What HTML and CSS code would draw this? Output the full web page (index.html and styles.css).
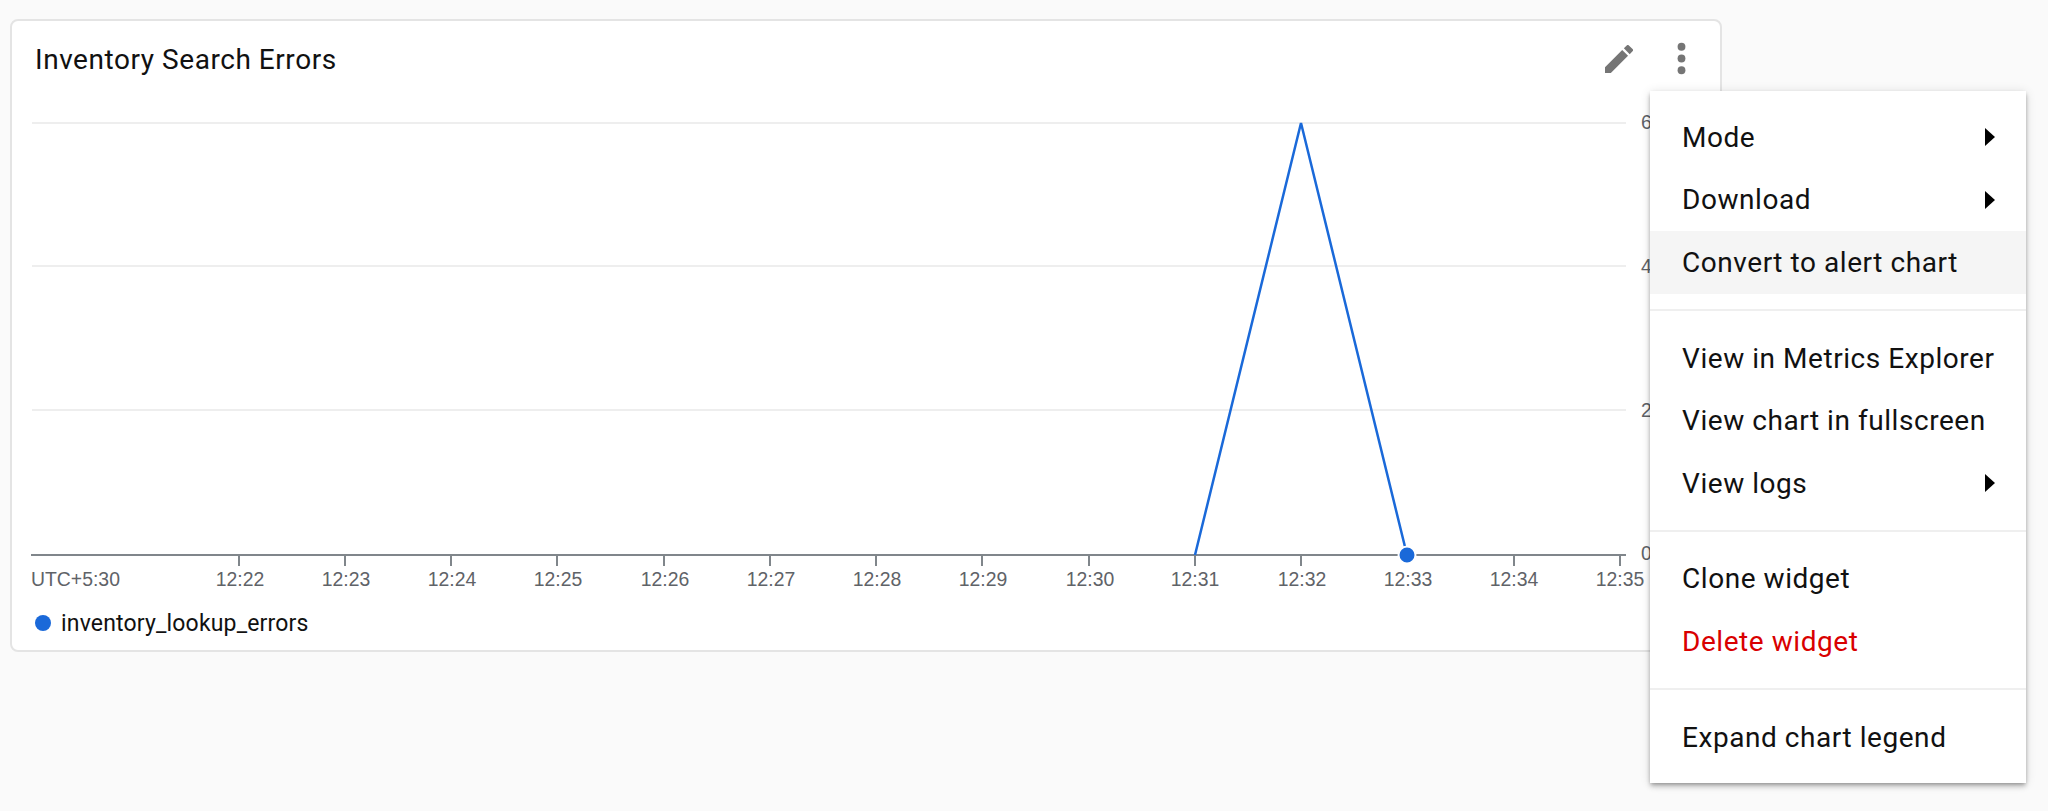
FILE: index.html
```html
<!DOCTYPE html>
<html lang="en">

<head>
    <meta charset="UTF-8">
    <title>Inventory Search Errors</title>
    <link rel="stylesheet" href="styles.css">
</head>

<body>
    <div class="card">
        <div class="card-header">
            <div class="card-title">Inventory Search Errors</div>
            <svg class="icon-edit" viewBox="3 3 18 18"><path d="M3 17.25V21h3.75L17.81 9.94l-3.75-3.75L3 17.25zM20.71 7.04a1 1 0 0 0 0-1.41l-2.34-2.34a1 1 0 0 0-1.41 0l-1.83 1.83 3.75 3.75 1.83-1.83z"/></svg>
            <svg class="icon-more" viewBox="0 0 24 24"><circle cx="12" cy="6" r="2"/><circle cx="12" cy="12" r="2"/><circle cx="12" cy="18" r="2"/></svg>
        </div>

        <!-- viewBox starts at the card's content corner so the numbers read as page pixels -->
        <svg class="chart" viewBox="12 93 1708 507">
            <g class="grid">
                <line x1="32" y1="123" x2="1626" y2="123"/>
                <line x1="32" y1="266" x2="1626" y2="266"/>
                <line x1="32" y1="410" x2="1626" y2="410"/>
            </g>
            <g class="axis">
                <line x1="31" y1="555" x2="1626" y2="555"/>
                <line x1="239" y1="555" x2="239" y2="566"/>
                <line x1="345" y1="555" x2="345" y2="566"/>
                <line x1="451" y1="555" x2="451" y2="566"/>
                <line x1="557" y1="555" x2="557" y2="566"/>
                <line x1="664" y1="555" x2="664" y2="566"/>
                <line x1="770" y1="555" x2="770" y2="566"/>
                <line x1="876" y1="555" x2="876" y2="566"/>
                <line x1="982" y1="555" x2="982" y2="566"/>
                <line x1="1089" y1="555" x2="1089" y2="566"/>
                <line x1="1195" y1="555" x2="1195" y2="566"/>
                <line x1="1301" y1="555" x2="1301" y2="566"/>
                <line x1="1514" y1="555" x2="1514" y2="566"/>
                <line x1="1620" y1="555" x2="1620" y2="566"/>
            </g>
            <g class="labels">
                <text x="31" y="586">UTC+5:30</text>
                <g class="tick-labels">
                    <text x="240" y="586">12:22</text>
                    <text x="346" y="586">12:23</text>
                    <text x="452" y="586">12:24</text>
                    <text x="558" y="586">12:25</text>
                    <text x="665" y="586">12:26</text>
                    <text x="771" y="586">12:27</text>
                    <text x="877" y="586">12:28</text>
                    <text x="983" y="586">12:29</text>
                    <text x="1090" y="586">12:30</text>
                    <text x="1195" y="586">12:31</text>
                    <text x="1302" y="586">12:32</text>
                    <text x="1408" y="586">12:33</text>
                    <text x="1514" y="586">12:34</text>
                    <text x="1620" y="586">12:35</text>
                </g>
                <text x="1641" y="129">6</text>
                <text x="1641" y="273">4</text>
                <text x="1641" y="417">2</text>
                <text x="1641" y="560">0</text>
            </g>
            <polyline class="series" points="1195,555 1301,123 1407,555"/>
            <circle class="series-dot" cx="1407" cy="555" r="8.5"/>
        </svg>

        <div class="legend">
            <span class="legend-dot"></span>
            <span>inventory_lookup_errors</span>
        </div>
    </div>

    <div class="menu">
        <div class="menu-group">
            <div class="menu-item">Mode<span class="arrow"></span></div>
            <div class="menu-item">Download<span class="arrow"></span></div>
            <div class="menu-item active">Convert to alert chart</div>
        </div>
        <div class="menu-group">
            <div class="menu-item">View in Metrics Explorer</div>
            <div class="menu-item">View chart in fullscreen</div>
            <div class="menu-item">View logs<span class="arrow"></span></div>
        </div>
        <div class="menu-group">
            <div class="menu-item">Clone widget</div>
            <div class="menu-item danger">Delete widget</div>
        </div>
        <div class="menu-group">
            <div class="menu-item">Expand chart legend</div>
        </div>
    </div>
</body>

</html>
```

FILE: styles.css
```css
body {
    margin: 0;
    height: 811px;
    overflow: hidden;
    background-color: #fafafa;
    font-family: Roboto, sans-serif;
    color: #111;
}

.card {
    box-sizing: border-box;
    width: 1712px;
    height: 633px;
    margin: 19px 0 0 10px;
    background-color: white;
    border: 2px solid #e4e4e4;
    border-radius: 8px;
}

.card-header {
    box-sizing: border-box;
    display: flex;
    align-items: center;
    height: 72px;
    padding: 3px 0 0 23px;
}

.card-title {
    flex: 1;
    padding-top: 2px;
    font-size: 28px;
    letter-spacing: 0.55px;
}

.icon-edit {
    width: 28px;
    height: 28px;
    fill: #757575;
}

.icon-more {
    width: 47px;
    height: 47px;
    margin: 0 15px 0 25px;
    fill: #757575;
}

.chart {
    display: block;
    width: 1708px;
    height: 507px;
}

.grid line {
    stroke: #eeeeee;
    stroke-width: 2;
}

.axis line {
    stroke: #80868b;
    stroke-width: 2;
}

.labels {
    font-family: "Liberation Sans", Arial, sans-serif;
    font-size: 19.4px;
    fill: #5f6368;
}

.tick-labels {
    text-anchor: middle;
}

.series {
    fill: none;
    stroke: #1a69d9;
    stroke-width: 2.5;
}

.series-dot {
    fill: #1a69d9;
    stroke: white;
    stroke-width: 2;
}

.legend {
    display: flex;
    align-items: center;
    gap: 10px;
    height: 46px;
    padding-left: 23px;
    font-size: 23px;
    letter-spacing: 0.17px;
}

.legend-dot {
    width: 16px;
    height: 16px;
    border-radius: 50%;
    background-color: #1a69d9;
}

.menu {
    position: absolute;
    left: 1650px;
    top: 91px;
    width: 376px;
    background-color: white;
    box-shadow: 0 2px 4px -1px rgba(0, 0, 0, 0.3), 0 4px 5px rgba(0, 0, 0, 0.14), 0 1px 10px rgba(0, 0, 0, 0.12);
}

.menu-group {
    padding: 16px 0 15px;
    border-bottom: 2px solid #efefef;
}

.menu-group:first-child {
    padding-top: 15px;
}

.menu-group:last-child {
    border-bottom: none;
}

.menu-item {
    display: flex;
    align-items: center;
    justify-content: space-between;
    height: 62.6px;
    padding: 0 31px 0 32px;
    font-size: 28px;
    letter-spacing: 0.55px;
}

.menu-item.active {
    background-color: #f5f5f5;
}

.menu-item.danger {
    color: #d90000;
}

.arrow {
    border-left: 10px solid black;
    border-top: 9px solid transparent;
    border-bottom: 9px solid transparent;
}
```
